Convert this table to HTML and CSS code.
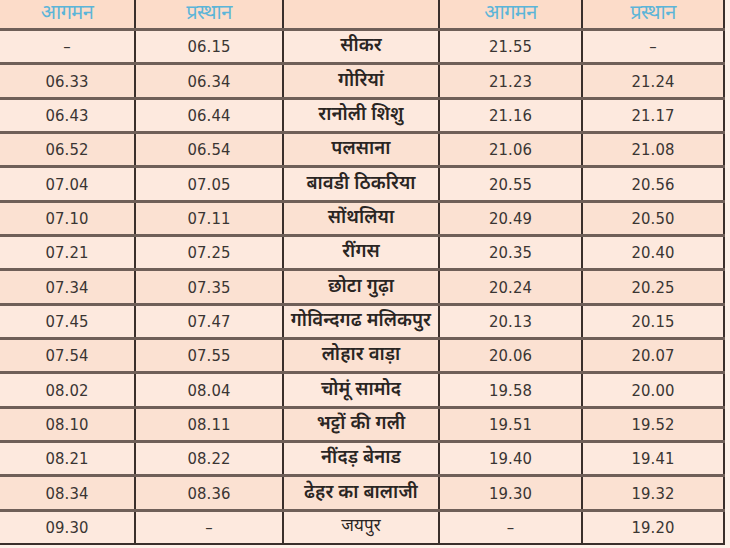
FILE: index.html
```html
<!DOCTYPE html>
<html lang="hi">
<head>
<meta charset="utf-8">
<link rel="stylesheet" href="styles.css">
</head>
<body>
<table class="tt">
  <colgroup>
    <col class="c1"><col class="c2"><col class="c3"><col class="c4"><col class="c5">
  </colgroup>
  <thead>
    <tr class="head">
      <th>आगमन</th><th>प्रस्थान</th><th></th><th>आगमन</th><th>प्रस्थान</th>
    </tr>
  </thead>
  <tbody>
    <tr><td>–</td><td>06.15</td><td class="st">सीकर</td><td>21.55</td><td>–</td></tr>
    <tr><td>06.33</td><td>06.34</td><td class="st">गोरियां</td><td>21.23</td><td>21.24</td></tr>
    <tr><td>06.43</td><td>06.44</td><td class="st">रानोली शिशु</td><td>21.16</td><td>21.17</td></tr>
    <tr><td>06.52</td><td>06.54</td><td class="st">पलसाना</td><td>21.06</td><td>21.08</td></tr>
    <tr><td>07.04</td><td>07.05</td><td class="st">बावडी ठिकरिया</td><td>20.55</td><td>20.56</td></tr>
    <tr><td>07.10</td><td>07.11</td><td class="st">सोंथलिया</td><td>20.49</td><td>20.50</td></tr>
    <tr><td>07.21</td><td>07.25</td><td class="st">रींगस</td><td>20.35</td><td>20.40</td></tr>
    <tr><td>07.34</td><td>07.35</td><td class="st">छोटा गुढ़ा</td><td>20.24</td><td>20.25</td></tr>
    <tr><td>07.45</td><td>07.47</td><td class="st">गोविन्दगढ मलिकपुर</td><td>20.13</td><td>20.15</td></tr>
    <tr><td>07.54</td><td>07.55</td><td class="st">लोहार वाड़ा</td><td>20.06</td><td>20.07</td></tr>
    <tr><td>08.02</td><td>08.04</td><td class="st">चोमूं सामोद</td><td>19.58</td><td>20.00</td></tr>
    <tr><td>08.10</td><td>08.11</td><td class="st">भट्टों की गली</td><td>19.51</td><td>19.52</td></tr>
    <tr><td>08.21</td><td>08.22</td><td class="st">नींदड़ बेनाड</td><td>19.40</td><td>19.41</td></tr>
    <tr><td>08.34</td><td>08.36</td><td class="st">ढेहर का बालाजी</td><td>19.30</td><td>19.32</td></tr>
    <tr><td>09.30</td><td>–</td><td class="st st-light">जयपुर</td><td>–</td><td>19.20</td></tr>
  </tbody>
</table>
</body>
</html>
```

FILE: styles.css
```css
html, body {
  margin: 0;
  padding: 0;
  background: #fdf0e8;
}
body {
  width: 730px;
  height: 548px;
  overflow: hidden;
}
.tt {
  border-collapse: collapse;
  table-layout: fixed;
  width: 724px;
  font-family: "DejaVu Sans Condensed", "Liberation Sans Narrow", "Roboto", sans-serif;
  color: #3a3533;
}
.c1 { width: 135px; }
.c2 { width: 148px; }
.c3 { width: 156px; }
.c4 { width: 143px; }
.c5 { width: 142px; }

.tt th, .tt td {
  padding: 0;
  text-align: center;
  border-bottom: 3px solid #6f5f58;
  border-right: 2px solid #3a2f2b;
}
.tt th {
  height: 28px;
  background: #fcdcc9;
  color: #5cb5d8;
  font-family: "Noto Sans Devanagari", "Lohit Devanagari", "FreeSans", sans-serif;
  font-weight: normal;
  font-size: 20px;
  letter-spacing: -0.6px;
  vertical-align: middle;
  line-height: 24px;
}
.tt td {
  height: 31.35px;
  font-size: 16.5px;
  letter-spacing: 0.1px;
}
.tt tbody tr:nth-child(odd) td { background: #fde9de; }
.tt tbody tr:nth-child(even) td { background: #fbe1d2; }
.tt tbody tr:last-child td { border-bottom: 2px solid #3a2f2b; }

.tt td.st {
  font-family: "Noto Sans Devanagari", "Lohit Devanagari", "FreeSans", sans-serif;
  font-size: 18.5px;
  font-weight: 600;
  color: #2a2523;
}
.tt td.st-light {
  font-weight: normal;
  font-size: 17px;
}
```
